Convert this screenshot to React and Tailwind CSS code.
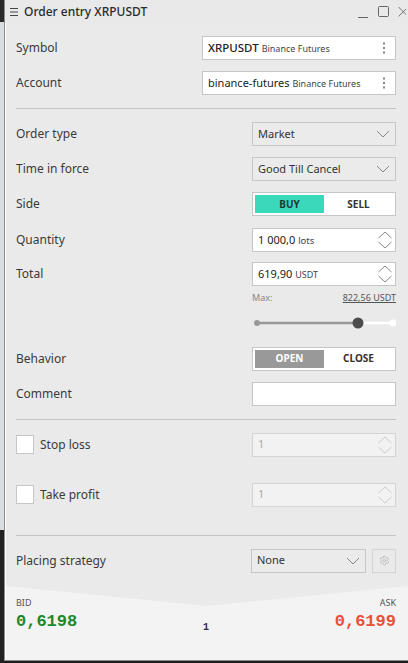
import React from 'react'
import { Settings } from 'lucide-react'

const font = { fontFamily: '"Noto Sans", "Open Sans", sans-serif' }

function Chevron() {
  return (
    <svg width="14" height="8" viewBox="0 0 14 8" className="shrink-0">
      <path d="M1 1 L7 7 L13 1" fill="none" stroke="#888" strokeWidth="1" />
    </svg>
  )
}

function Spinner({ color = '#888' }) {
  return (
    <svg width="16" height="20" viewBox="0 0 16 20" className="shrink-0">
      <path d="M1.5 8 L8 2 L14.5 8" fill="none" stroke={color} strokeWidth="1" />
      <path d="M1.5 12 L8 18 L14.5 12" fill="none" stroke={color} strokeWidth="1" />
    </svg>
  )
}

function Kebab() {
  return (
    <svg width="4" height="14" viewBox="0 0 4 14" className="shrink-0">
      <rect x="1" y="1.5" width="2" height="2" fill="#888" />
      <rect x="1" y="6" width="2" height="2" fill="#888" />
      <rect x="1" y="10.5" width="2" height="2" fill="#888" />
    </svg>
  )
}

function Row({ label, children, className = '' }) {
  return (
    <div className={`flex items-center justify-between h-6 ${className}`}>
      <span className="text-[12px] text-[#3a3a3a]">{label}</span>
      {children}
    </div>
  )
}

function Select({ value, w = 'w-[144px]' }) {
  return (
    <div className={`${w} h-6 bg-[#ebebeb] border border-[#c6c6c6] flex items-center justify-between pl-[5px] pr-[5px]`}>
      <span className="text-[11px] text-[#333]">{value}</span>
      <Chevron />
    </div>
  )
}

function Toggle({ left, right, on }) {
  return (
    <div className="w-[144px] h-6 bg-white border border-[#c6c6c6] grid grid-cols-2 p-[2px] text-[10px] font-bold">
      <div className={`${on} flex items-center justify-center`}>{left}</div>
      <div className="flex items-center justify-center text-[#333]">{right}</div>
    </div>
  )
}

function Separator({ className = '' }) {
  return <div className={`h-px bg-[#c4c4c4] ${className}`} />
}

function Check({ label }) {
  return (
    <span className="flex items-center gap-[6px]">
      <span className="w-[18px] h-[19px] bg-white border border-[#c6c6c6] inline-block" />
      {label}
    </span>
  )
}

export default function App() {
  return (
    <div className="w-[408px] h-[663px] bg-[#1e1e1e] flex overflow-hidden" style={font}>
      <div className="w-[4px] flex flex-col">
        <div className="h-[22px] bg-[#2a2a2a]" />
        <div className="h-[508px] bg-[#d8dedf]" />
        <div className="flex-1 bg-[#222]" />
      </div>
      <div className="flex-1 h-[661px] flex flex-col border-l border-b border-[#8c8c8c] bg-[#eaeaea]">
        <div className="h-[23px] flex items-center pl-[5px] pr-[2px] bg-[#e9e9e9]">
          <svg width="8" height="8" viewBox="0 0 8 8" className="mr-[6px]">
            <path d="M0 0.5 H8 M0 4 H8 M0 7.5 H8" stroke="#444" strokeWidth="1" />
          </svg>
          <span className="text-[12px] font-medium text-[#2b2b2b]">Order entry XRPUSDT</span>
          <div className="ml-auto flex items-center gap-[9px] text-[#666]">
            <svg width="11" height="12" viewBox="0 0 11 12"><path d="M0 11.5 H10" stroke="#666" strokeWidth="1" /></svg>
            <svg width="11" height="12" viewBox="0 0 11 12"><rect x="0.5" y="0.5" width="10" height="10" rx="1" fill="none" stroke="#666" /></svg>
            <svg width="8" height="12" viewBox="0 0 8 12"><path d="M0.5 1 L10 10.5 M10 1 L0.5 10.5" stroke="#777" strokeWidth="1" /></svg>
          </div>
        </div>
        <div className="flex-1 flex flex-col border-l border-white">
          <div className="flex flex-col pl-[10px] pr-[12px] pt-[13px]">
            <Row label="Symbol">
              <div className="w-[194px] h-6 bg-white border border-[#c6c6c6] flex items-center justify-between pl-[5px] pr-[9px]">
                <span className="text-[11.5px] text-[#222] font-medium">XRPUSDT <span className="text-[9px] font-normal text-[#444]">Binance Futures</span></span>
                <Kebab />
              </div>
            </Row>
            <Row label="Account" className="mt-[11px]">
              <div className="w-[194px] h-6 bg-white border border-[#c6c6c6] flex items-center justify-between pl-[5px] pr-[9px]">
                <span className="text-[11px] text-[#222]">binance-futures <span className="text-[9px] text-[#444]">Binance Futures</span></span>
                <Kebab />
              </div>
            </Row>
            <Separator className="mt-[13px]" />
            <Row label="Order type" className="mt-[13px]"><Select value="Market" /></Row>
            <Row label="Time in force" className="mt-[11px]"><Select value="Good Till Cancel" /></Row>
            <Row label="Side" className="mt-[11px]"><Toggle left="BUY" right="SELL" on="bg-[#3bd9bb] text-[#1c3b35]" /></Row>
            <Row label="Quantity" className="mt-[12px]">
              <div className="w-[144px] h-6 bg-white border border-[#c6c6c6] flex items-center justify-between pl-[5px] pr-[2px]">
                <span className="text-[11px] text-[#222]">1 000,0 <span className="text-[9.5px] text-[#444]">lots</span></span>
                <Spinner />
              </div>
            </Row>
            <Row label="Total" className="mt-[10px]">
              <div className="w-[144px] h-6 bg-white border border-[#c6c6c6] flex items-center justify-between pl-[5px] pr-[2px]">
                <span className="text-[11px] text-[#222]">619,90 <span className="text-[9px] text-[#444]">USDT</span></span>
                <Spinner />
              </div>
            </Row>
            <div className="flex justify-end mt-[5px]">
              <div className="w-[144px] flex justify-between text-[9px] text-[#888]">
                <span>Max:</span>
                <span className="text-[#555] underline">822,56 USDT</span>
              </div>
            </div>
            <div className="flex justify-end mt-[11px]">
              <svg width="144" height="14" viewBox="0 0 144 14">
                <line x1="5" y1="7" x2="106" y2="7" stroke="#999" strokeWidth="2.5" />
                <line x1="106" y1="7" x2="141" y2="7" stroke="#fff" strokeWidth="2.5" />
                <circle cx="5" cy="7" r="3" fill="#999" />
                <circle cx="141" cy="7" r="3.5" fill="#fff" />
                <circle cx="106" cy="7" r="5.5" fill="#4d4d4d" />
              </svg>
            </div>
            <Row label="Behavior" className="mt-[17px]"><Toggle left="OPEN" right="CLOSE" on="bg-[#999] text-white" /></Row>
            <Row label="Comment" className="mt-[11px]">
              <div className="w-[144px] h-6 bg-white border border-[#c6c6c6]" />
            </Row>
            <Separator className="mt-[13px]" />
            <Row className="mt-[13px]" label={<Check label="Stop loss" />}>
              <div className="w-[144px] h-6 bg-[#f2f2f2] border border-[#d4d4d4] flex items-center justify-between pl-[5px] pr-[2px]">
                <span className="text-[11px] text-[#aaa]">1</span>
                <Spinner color="#ccc" />
              </div>
            </Row>
            <Row className="mt-[26px]" label={<Check label="Take profit" />}>
              <div className="w-[144px] h-6 bg-[#f2f2f2] border border-[#d4d4d4] flex items-center justify-between pl-[5px] pr-[2px]">
                <span className="text-[11px] text-[#aaa]">1</span>
                <Spinner color="#ccc" />
              </div>
            </Row>
            <Separator className="mt-[28px]" />
            <Row label="Placing strategy" className="mt-[13px]">
              <div className="flex gap-[6px]">
                <Select value="None" w="w-[115px]" />
                <div className="w-6 h-6 border border-[#d4d4d4] flex items-center justify-center">
                  <Settings size={11} color="#bbb" strokeWidth={2} />
                </div>
              </div>
            </Row>
          </div>
          <div className="relative flex-1 bg-[#f3f3f3] mt-[13px] pl-[10px] pr-[12px] pt-[10px]">
            <svg className="absolute left-0 top-0" width="402" height="20" viewBox="0 0 402 20" preserveAspectRatio="none">
              <polygon points="0,0 402,0 201,20" fill="#eaeaea" />
            </svg>
            <div className="relative flex justify-between text-[9px] text-[#555]">
              <span>BID</span>
              <span>ASK</span>
            </div>
            <div className="relative flex items-end justify-between mt-[4px]" style={{ fontFamily: '"Liberation Mono", "DejaVu Sans Mono", monospace' }}>
              <span className="text-[17px] font-bold text-[#1a8a2a] leading-none">0,6198</span>
              <span className="text-[10px] font-bold text-[#333] leading-none mb-[-3px]">1</span>
              <span className="text-[17px] font-bold text-[#e8503a] leading-none">0,6199</span>
            </div>
          </div>
        </div>
      </div>
    </div>
  )
}
